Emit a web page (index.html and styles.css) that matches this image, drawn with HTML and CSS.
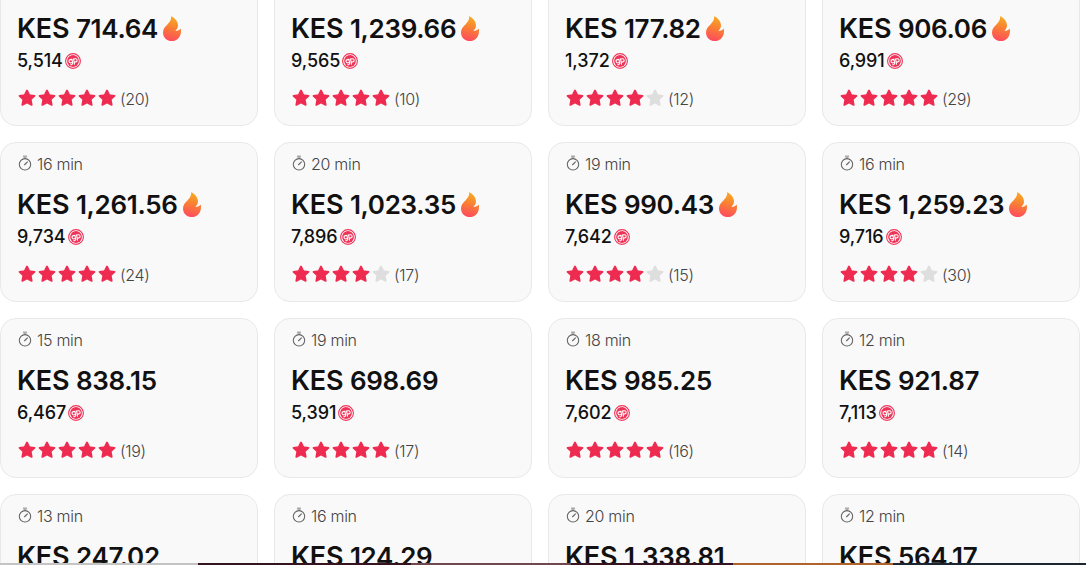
FILE: index.html
```
<!DOCTYPE html>
<html lang="en">
<head>
  <meta charset="UTF-8" />
  <meta name="viewport" content="width=device-width, initial-scale=1.0"/>
  <title>Offers</title>
  <link rel="stylesheet" href="styles.css">
</head>
<body>
  <svg class="defs" width="0" height="0">
    <defs>
      <linearGradient id="flameFill" x1="0.6" y1="0" x2="0.4" y2="1">
        <stop offset="0" stop-color="#f6ae22"/>
        <stop offset="0.45" stop-color="#f98232"/>
        <stop offset="1" stop-color="#ff4a5e"/>
      </linearGradient>
    </defs>
    <symbol id="clock" viewBox="0 0 14 16">
      <path d="M5 1.500h4" stroke="#aaa" stroke-width="2" fill="none"/>
      <path d="M7 2v2" stroke="#888" fill="none"/>
      <circle cx="7" cy="9.300" r="5.700" stroke="#666" stroke-width="1.100" fill="none"/>
      <path d="M6.300 10 9.700 6.600" stroke="#666" stroke-width="1.200" fill="none"/>
    </symbol>
    <symbol id="flame" viewBox="0 0 18 25">
      <path d="M8.200 0C12 2.200 15 5.500 15 9.500c0 2.200-1.300 4-2.600 5.500 2.200.1 4.200-.9 5.300-2.400.3 1.200.4 2.900.1 4.600C17 22 13.400 25 9 25c-5 0-9-3.600-9-8.600 0-3.400 1.700-5.400 4.200-7.700C7 6 8.500 3.500 8.200 0z" fill="url(#flameFill)"/>
    </symbol>
    <symbol id="coin" viewBox="0 0 16 16">
      <circle cx="8" cy="8" r="7.400" fill="#fff" stroke="#ee3358" stroke-width="1.100"/>
      <circle cx="8" cy="8" r="5.900" fill="#ee3358"/>
      <g transform="rotate(-10 8 8)" fill="none" stroke="#fff" stroke-width="1.100">
        <path d="M7.300 6.200H5.600c-1.100 0-1.600.7-1.600 1.600s.5 1.600 1.500 1.600h1.800M7.300 5.700v4.100c0 1.300-1.100 1.700-2.600 1.500M8.900 11.800V6.200h1.800c1 0 1.500.7 1.500 1.600s-.5 1.600-1.500 1.600H8.900"/>
      </g>
    </symbol>
    <symbol id="star" viewBox="0 0 18 18">
      <path d="M9 1.500 11.300 6.100l5.200.7-3.800 3.600 1 5.500L9 13.400l-4.700 2.500 1-5.500-3.800-3.600 5.200-.7z" fill="currentColor" stroke="currentColor" stroke-width="1.800" stroke-linejoin="round"/>
    </symbol>
  </svg>

  <main class="viewport">
    <div class="offers" id="offers"></div>
    <div class="bottom-strip"></div>
  </main>

  <script>
    // time, price, points, stars, reviews, hot
    const offers = [
      ['', '714.64', '5,514', 5, 20, true],
      ['', '1,239.66', '9,565', 5, 10, true],
      ['', '177.82', '1,372', 4, 12, true],
      ['', '906.06', '6,991', 5, 29, true],
      ['16 min', '1,261.56', '9,734', 5, 24, true],
      ['20 min', '1,023.35', '7,896', 4, 17, true],
      ['19 min', '990.43', '7,642', 4, 15, true],
      ['16 min', '1,259.23', '9,716', 4, 30, true],
      ['15 min', '838.15', '6,467', 5, 19, false],
      ['19 min', '698.69', '5,391', 5, 17, false],
      ['18 min', '985.25', '7,602', 5, 16, false],
      ['12 min', '921.87', '7,113', 5, 14, false],
      ['13 min', '247.02'],
      ['16 min', '124.29'],
      ['20 min', '1,338.81'],
      ['12 min', '564.17']
    ];

    function icon(name, cls) {
      return `<svg class="${cls}"><use href="#${name}"/></svg>`;
    }

    function stars(count) {
      let html = '';
      for (let i = 0; i < 5; i++) {
        html += icon('star', i < count ? 'star' : 'star empty');
      }
      return html;
    }

    function details(points, rating, reviews) {
      if (!points) return '';
      return `<div class="points"><span>${points}</span>${icon('coin', 'coin')}</div>
        <div class="rating">${stars(rating)}<span class="reviews">(${reviews})</span></div>`;
    }

    document.getElementById('offers').innerHTML = offers.map(([time, price, points, rating, reviews, hot]) => `
      <div class="card">
        <div class="time">${time ? `${icon('clock', 'clock')}<span>${time}</span>` : ''}</div>
        <div class="price"><span>KES <span class="amount">${price}</span></span>${hot ? icon('flame', 'flame') : ''}</div>
        ${details(points, rating, reviews)}
      </div>`).join('');
  </script>
</body>
</html>
```
FILE: styles.css
```
* {
  box-sizing: border-box;
}
body {
  margin: 0;
  background: #fff;
  color: #111;
  font-family: Inter, 'Liberation Sans', sans-serif;
}
.defs {
  position: absolute;
}
.viewport {
  position: relative;
  height: 565px;
  overflow: hidden;
}
.offers {
  display: grid;
  grid-template-columns: repeat(4, 258px);
  grid-auto-rows: 160px;
  gap: 16px;
  margin-top: -34px;
}
.card {
  padding: 11px 16px 0;
  background: #f9f9f9;
  border: 1px solid #e9e9e9;
  border-radius: 16px;
}
.time {
  display: flex;
  align-items: center;
  height: 20px;
  padding-left: 1px;
  gap: 5px;
  font-size: 16px;
  font-weight: 300;
  letter-spacing: -0.3px;
  color: #444;
}
.clock {
  width: 14px;
  height: 16px;
  margin-top: -3px;
}
.price {
  display: flex;
  align-items: center;
  height: 32px;
  margin-top: 14px;
  gap: 5px;
  font-size: 27px;
  font-weight: 600;
  letter-spacing: -0.2px;
  white-space: nowrap;
}
.amount {
  font-size: 26px;
  letter-spacing: -0.3px;
}
.flame {
  width: 18px;
  height: 25px;
}
.points {
  display: flex;
  align-items: center;
  height: 22px;
  margin-top: 5px;
  gap: 2px;
  font-size: 18px;
  font-weight: 500;
  letter-spacing: -0.1px;
}
.coin {
  width: 16px;
  height: 16px;
  margin-top: 1px;
}
.rating {
  display: flex;
  align-items: center;
  height: 20px;
  margin-top: 17px;
  padding-left: 1px;
  gap: 2px;
}
.star {
  width: 18px;
  height: 18px;
  color: #ee2b50;
}
.star.empty {
  color: #dedede;
}
.reviews {
  margin: 2px 0 0 2px;
  font-size: 16px;
  font-weight: 300;
  letter-spacing: -0.3px;
  color: #444;
}
.bottom-strip {
  position: absolute;
  left: 0;
  right: 0;
  bottom: 0;
  height: 2px;
  background: linear-gradient(to right, #c4c4c4 198px, #35131f 198px 411px, #704850 411px 571px, #35131f 571px 733px, #b0642c 733px 893px, #1c2530 893px);
}
```
